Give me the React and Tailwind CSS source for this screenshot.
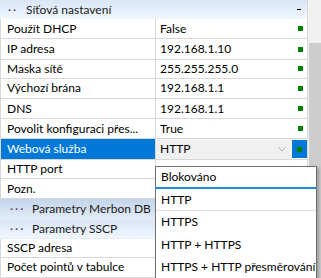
import React from "react";

const font = { fontFamily: 'Lato, "Noto Sans", sans-serif' };

function Green() {
  return <span className="ml-auto mr-[4px] block w-[5px] h-[5px] bg-[#008000]" />;
}

function Row({ name, value, h, selected }) {
  return (
    <div className={`flex border-b border-l border-[#d8d8d8] ${h}`}>
      <div
        className={`w-[155px] shrink-0 border-r border-[#d8d8d8] pl-[6px] flex items-center overflow-hidden whitespace-nowrap ${
          selected ? "bg-[#0078d7] text-white" : "text-black"
        }`}
      >
        <span>{name}</span>
      </div>
      {selected ? (
        <div className="flex-1 flex items-stretch">
          <div className="flex-1 bg-[#f0f0f0] flex items-center pl-[4px]">
            <span>{value}</span>
            <svg className="ml-auto mr-[6px]" width="8" height="5" viewBox="0 0 8 5">
              <polyline points="0.5,0.5 4,4 7.5,0.5" fill="none" stroke="#b0b0b0" strokeWidth="1" />
            </svg>
          </div>
          <div className="w-[15px] bg-[#0078d7] flex items-center justify-center my-[1px]">
            <span className="block w-[5px] h-[5px] bg-[#008000]" />
          </div>
        </div>
      ) : (
        <div className="flex-1 flex items-center pl-[4px] whitespace-nowrap">
          <span>{value}</span>
          {value ? <Green /> : null}
        </div>
      )}
    </div>
  );
}

function Group({ title, h, dark }) {
  return (
    <div
      className={`flex items-center ${h} ${
        dark
          ? "bg-gradient-to-b from-[#c3d4ea] to-[#e3ecf7]"
          : "bg-gradient-to-b from-[#d9e6f6] to-[#f1f6fd]"
      } border-b border-[#e6edf6] whitespace-nowrap`}
    >
      <span className="text-[#5a3a6a] tracking-[2px] pl-[10px] w-[32px]">···</span>
      <span className="text-[#1a1a1a]">{title}</span>
    </div>
  );
}

export default function App() {
  return (
    <div
      className="relative w-[321px] h-[278px] overflow-hidden bg-white text-[12px] leading-none flex"
      style={font}
    >
      <div className="w-[308px] shrink-0 border-r border-[#d8d8d8] flex flex-col">
        <div className="flex items-center h-[20px] bg-gradient-to-b from-[#d9e6f6] to-[#f1f6fd] whitespace-nowrap">
          <span className="text-[#5a3a6a] tracking-[2px] pl-[8px] w-[26px]">··</span>
          <span className="text-[#1a1a1a]">Síťová nastavení</span>
          <span className="ml-auto mr-[6px] block w-[4px] h-[1px] bg-black" />
        </div>
        <Row name="Použít DHCP" value="False" h="h-[21px]" />
        <Row name="IP adresa" value="192.168.1.10" h="h-[21px]" />
        <Row name="Maska sítě" value="255.255.255.0" h="h-[20px]" />
        <Row name="Výchozí brána" value="192.168.1.1" h="h-[21px]" />
        <Row name="DNS" value="192.168.1.1" h="h-[21px]" />
        <Row name="Povolit konfiguraci přes..." value="True" h="h-[21px]" />
        <Row name="Webová služba" value="HTTP" h="h-[21px]" selected />
        <Row name="HTTP port" value="" h="h-[20px]" />
        <Row name="Pozn." value="" h="h-[21px]" />
        <Group title="Parametry Merbon DB" h="h-[22px]" dark />
        <Group title="Parametry SSCP" h="h-[19px]" />
        <Row name="SSCP adresa" value="" h="h-[20px]" />
        <Row name="Počet pointů v tabulce" value="" h="h-[21px]" />
      </div>
      <div className="flex-1 bg-[#f0f0f0] pl-[1px] pt-[43px]">
        <div className="h-full bg-[#cdcdcd]" />
      </div>

      <div className="absolute left-[155px] top-[166px] w-[162px] h-[120px] bg-white border border-[#707070] shadow-[2px_2px_3px_rgba(0,0,0,0.25)] flex flex-col whitespace-nowrap">
        <div className="h-[22px] flex items-center pl-[5px] border-b-2 border-[#1e8fe1]">Blokováno</div>
        <div className="h-[22px] flex items-center pl-[5px] border-b border-[#e0e0e0]">HTTP</div>
        <div className="h-[22px] flex items-center pl-[5px]">HTTPS</div>
        <div className="h-[23px] flex items-center pl-[5px]">HTTP + HTTPS</div>
        <div className="h-[22px] flex items-center pl-[5px]">HTTPS + HTTP přesměrování</div>
      </div>
    </div>
  );
}
